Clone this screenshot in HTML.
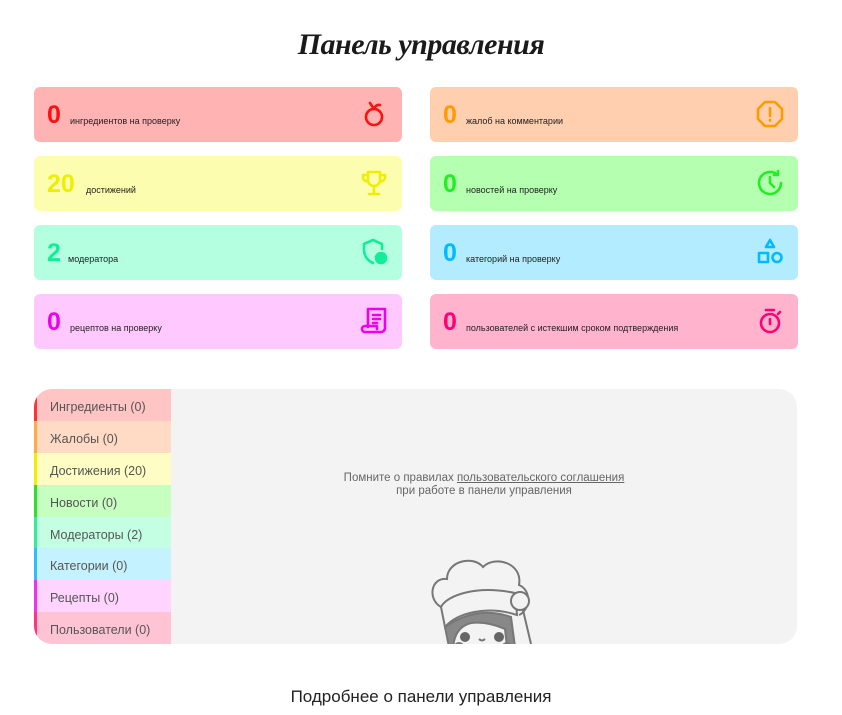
<!DOCTYPE html>
<html><head><meta charset="utf-8"><style>
*{margin:0;padding:0;box-sizing:border-box}
body{width:842px;height:715px;background:#fff;font-family:"Liberation Sans",sans-serif;color:#222;position:relative;overflow:hidden}
h1{position:absolute;top:28px;left:0;width:842px;text-align:center;font-family:"Liberation Serif",serif;font-style:italic;font-weight:bold;font-size:30px;color:#1a1a1a;letter-spacing:-0.5px}
.card{position:absolute;width:368px;height:55px;border-radius:6px}
.card .n{position:absolute;left:13px;top:14px;font-size:25px;line-height:28px;font-weight:bold}
.card .t{position:absolute;top:29px;font-size:9px;color:#222}
.card svg{position:absolute;right:14px;top:13px;width:28px;height:28px;fill:none;stroke-width:2.6;stroke-linecap:round;stroke-linejoin:round}
.panel{position:absolute;left:34px;top:389px;width:763px;height:255px;background:#f3f3f3;border-radius:18px;overflow:hidden}
.side{position:absolute;left:0;top:0;width:137px;height:255px}
.side div{height:31.875px;font-size:12.5px;color:#555;padding-left:13px;line-height:36px;border-left:3px solid}
.msg{position:absolute;left:137px;width:626px;top:83px;text-align:center;font-size:11.5px;color:#666;line-height:13px}
.foot{position:absolute;top:687px;left:0;width:842px;text-align:center;font-size:17px;color:#222}
</style></head><body>
<h1>Панель управления</h1>

<div class="card" style="left:34px;top:87px;background:#ffb3b3"><span class="n" style="color:#ff1010">0</span><span class="t" style="left:36px">ингредиентов на проверку</span>
<svg viewBox="0 0 28 28" stroke="#ff1010"><circle cx="14" cy="17" r="8"/><path d="M14 9 L10 3 M14 9 Q16 4 20 5"/></svg></div>
<div class="card" style="left:430px;top:87px;background:#ffcfb0"><span class="n" style="color:#ff9a00">0</span><span class="t" style="left:36px">жалоб на комментарии</span>
<svg viewBox="0 0 28 28" stroke="#ff9a00"><path d="M9 2h10l7 7v10l-7 7H9l-7-7V9z"/><path d="M14 8v8M14 20v.5"/></svg></div>

<div class="card" style="left:34px;top:156px;background:#fdfdb0"><span class="n" style="color:#eeee00">20</span><span class="t" style="left:52px">достижений</span>
<svg viewBox="0 0 28 28" stroke="#eeee00"><path d="M8 3h12v8a6 6 0 0 1-12 0z M8 6H3v3a4 4 0 0 0 5 3 M20 6h5v3a4 4 0 0 1-5 3 M14 17v7 M9 25h10"/></svg></div>
<div class="card" style="left:430px;top:156px;background:#b5ffb0"><span class="n" style="color:#22ee22">0</span><span class="t" style="left:36px">новостей на проверку</span>
<svg viewBox="0 0 28 28" stroke="#22ee22"><path d="M25 14A11 11 0 1 1 21 5.5 M22 2v4h-4 M14 8v6l4 4"/></svg></div>

<div class="card" style="left:34px;top:225px;background:#b3ffe0"><span class="n" style="color:#11ee99">2</span><span class="t" style="left:34px">модератора</span>
<svg viewBox="0 0 28 28" stroke="#11ee99"><path d="M13 25C6 22 4 17 4 11V6l9-4 9 4v5"/><circle cx="21" cy="20" r="5" fill="#11ee99"/></svg></div>
<div class="card" style="left:430px;top:225px;background:#b3ecff"><span class="n" style="color:#00bbff">0</span><span class="t" style="left:36px">категорий на проверку</span>
<svg viewBox="0 0 28 28" stroke="#00bbff"><path d="M14 2l4 7h-8z"/><rect x="3" y="15" width="9" height="9"/><circle cx="21" cy="19.5" r="4.5"/></svg></div>

<div class="card" style="left:34px;top:294px;background:#ffc9ff"><span class="n" style="color:#ee00ee">0</span><span class="t" style="left:36px">рецептов на проверку</span>
<svg viewBox="0 0 28 28" stroke="#ee00ee"><path d="M8 20V2h17v19a4 4 0 0 1-4 4H5a3 3 0 0 1 0-6h12v3 M13 8h7M13 12h7M13 16h4"/></svg></div>
<div class="card" style="left:430px;top:294px;background:#ffb3cc"><span class="n" style="color:#ff0077">0</span><span class="t" style="left:36px">пользователей с истекшим сроком подтверждения</span>
<svg viewBox="0 0 28 28" stroke="#ff0077"><circle cx="14" cy="16" r="9"/><path d="M10 3h8 M14 12v5 M22 7l2-2"/></svg></div>

<div class="panel">
<div class="side">
<div style="background:#ffc4c4;border-color:#ff3333">Ингредиенты (0)</div>
<div style="background:#ffdac4;border-color:#ffaa44">Жалобы (0)</div>
<div style="background:#fdfdc4;border-color:#f0f000">Достижения (20)</div>
<div style="background:#c6ffc0;border-color:#33dd33">Новости (0)</div>
<div style="background:#c4ffe4;border-color:#33ee99">Модераторы (2)</div>
<div style="background:#c4f2ff;border-color:#33bbff">Категории (0)</div>
<div style="background:#ffd4ff;border-color:#ee33ee">Рецепты (0)</div>
<div style="background:#ffc4d4;border-color:#ff3388">Пользователи (0)</div>
</div>
<div class="msg">Помните о правилах <u>пользовательского соглашения</u><br>при работе в панели управления</div>
<svg style="position:absolute;left:392px;top:166px" width="114" height="92" viewBox="0 0 112 92" fill="none" stroke="#777" stroke-width="2">
<path d="M14 52C0 44 4 22 20 24C20 6 46 0 56 12C68 0 96 8 92 30C106 36 102 56 92 60"/>
<path d="M14 52C20 40 50 30 88 38L90 60C60 50 30 58 18 72Z" fill="#f3f3f3"/>
<path d="M18 72Q50 50 84 62L88 92H22Z" fill="#888"/>
<path d="M26 92Q28 72 44 68Q60 66 78 74L80 92Z" fill="#f3f3f3"/>
<circle cx="38" cy="82" r="5" fill="#666" stroke="none"/><circle cx="72" cy="82" r="5" fill="#666" stroke="none"/>
<path d="M52 84q3 3 6 0"/>
<circle cx="93" cy="46" r="9" fill="#f3f3f3"/><path d="M96 55l8 34"/>
<path d="M28 90q4-4 8 0M76 90q4-4 8 0"/>
</svg>
</div>
<div class="foot">Подробнее о панели управления</div>
</body></html>
